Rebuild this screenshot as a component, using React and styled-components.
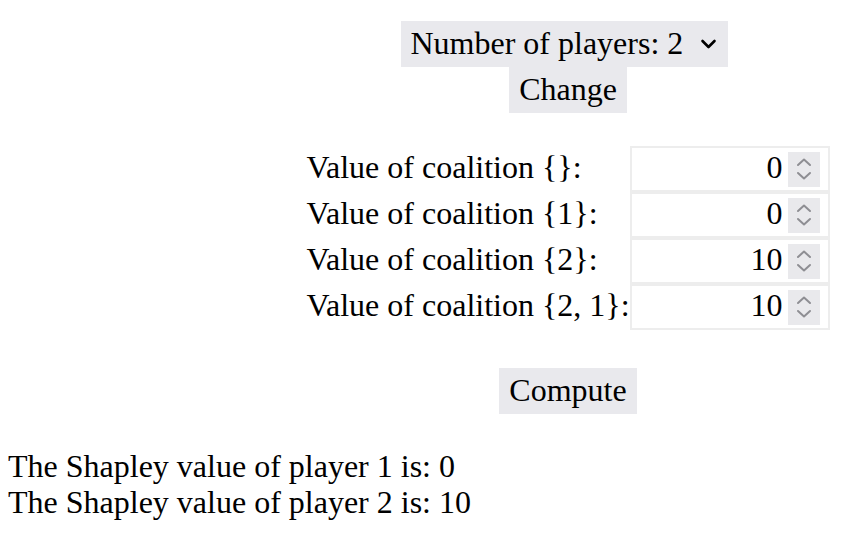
import styled, { createGlobalStyle } from "styled-components";

const GlobalStyle = createGlobalStyle`
    body {
        margin: 8px;
        font-family: "Liberation Serif", "Times New Roman", serif;
        font-size: 32px;
        color: #000;
        background: #fff;
        overflow: hidden;
    }
`;

const Page = styled.div`
    width: 100%;
`;
const Controls = styled.div`
    display: flex;
    flex-direction: column;
    align-items: center;
    padding: 13px 0 0 294px;
`;
const SelectBox = styled.label`
    display: inline-flex;
    align-items: center;
    height: 46px;
    box-sizing: border-box;
    padding: 0 11px 0 0;
    background-color: #e9e9ed;
    margin-left: -8px;
`;
const Select = styled.select`
    appearance: none;
    -webkit-appearance: none;
    border: none;
    background: transparent;
    font: inherit;
    color: inherit;
    padding: 0 0 2px 10px;
    margin: 0;
    outline: none;
`;
const Chevron = styled.svg`
    width: 17px;
    height: 10px;
    margin-left: 16px;
    pointer-events: none;
`;
const Button = styled.button`
    font: inherit;
    color: inherit;
    height: 46px;
    border: none;
    background-color: #e9e9ed;
    padding: 0 10px 2px;
    margin: 0;
`;
const Form = styled.div`
    display: grid;
    grid-template-columns: auto 200px;
    align-items: center;
    margin-top: 33px;
`;
const Label = styled.div`
    height: 46px;
    line-height: 42px;
    white-space: nowrap;
`;
const Field = styled.div`
    display: flex;
    align-items: center;
    height: 46px;
    box-sizing: border-box;
    border: 2px solid #ededed;
    padding: 3px 8px 3px 0;
`;
const NumberInput = styled.input`
    flex: 1;
    min-width: 0;
    border: none;
    outline: none;
    background: transparent;
    font: inherit;
    color: inherit;
    text-align: right;
    padding: 0 5px 4px 0;
    margin: 0;
    appearance: textfield;
    -moz-appearance: textfield;
    &::-webkit-inner-spin-button,
    &::-webkit-outer-spin-button {
        -webkit-appearance: none;
        margin: 0;
    }
`;
const Spinner = styled.span`
    display: flex;
    align-items: center;
    justify-content: center;
    width: 32px;
    height: 35px;
    background-color: #e9e9ec;
`;
const ComputeRow = styled.div`
    margin-top: 38px;
`;
const Results = styled.div`
    margin-top: 34px;
    line-height: 36px;
`;

const coalitions = [
    { label: "{}", value: 0 },
    { label: "{1}", value: 0 },
    { label: "{2}", value: 10 },
    { label: "{2, 1}", value: 10 },
];

function SpinIcon() {
    return (
        <svg width="16" height="24" viewBox="0 0 16 24" fill="none" stroke="#8e8e93" strokeWidth="2" strokeLinecap="round" strokeLinejoin="round">
            <path d="M2 8 L8 2.5 L14 8" />
            <path d="M2 16 L8 21.5 L14 16" />
        </svg>
    );
}

export default function App() {
    return (
        <Page>
            <GlobalStyle />
            <Controls>
                <SelectBox>
                    <Select defaultValue="2">
                        <option value="2">Number of players: 2</option>
                        <option value="3">Number of players: 3</option>
                    </Select>
                    <Chevron viewBox="0 0 17 10" fill="none" stroke="#000" strokeWidth="2.6" strokeLinecap="round" strokeLinejoin="round">
                        <path d="M2.5 2 L8.5 8 L14.5 2" />
                    </Chevron>
                </SelectBox>
                <Button>Change</Button>
                <Form>
                    {coalitions.map((c) => (
                        <>
                            <Label key={c.label + "l"}>Value of coalition {c.label}:</Label>
                            <Field key={c.label + "f"}>
                                <NumberInput type="number" defaultValue={c.value} />
                                <Spinner><SpinIcon /></Spinner>
                            </Field>
                        </>
                    ))}
                </Form>
                <ComputeRow>
                    <Button>Compute</Button>
                </ComputeRow>
            </Controls>
            <Results>
                <div>The Shapley value of player 1 is: 0</div>
                <div>The Shapley value of player 2 is: 10</div>
            </Results>
        </Page>
    );
}
